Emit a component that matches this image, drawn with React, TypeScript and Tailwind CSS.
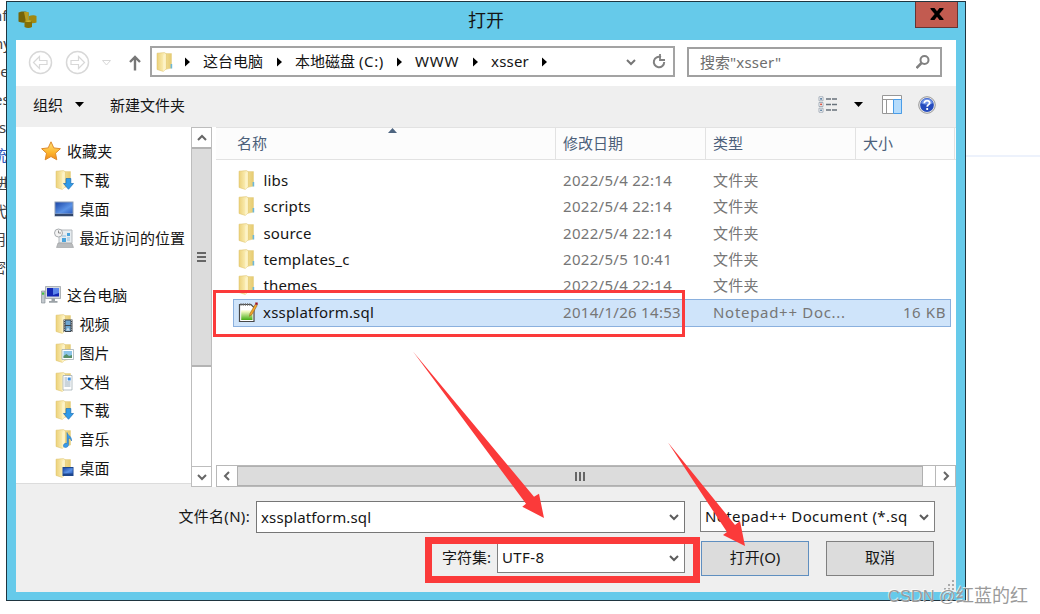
import type { ReactNode } from "react";

type IconName =
  | "star"
  | "download"
  | "desktop"
  | "recent"
  | "computer"
  | "video"
  | "picture"
  | "document"
  | "music"
  | "desktopFolder";

const sidebarItems: { label: string; icon: IconName; root?: boolean }[][] = [
  [
    { label: "收藏夹", icon: "star", root: true },
    { label: "下载", icon: "download" },
    { label: "桌面", icon: "desktop" },
    { label: "最近访问的位置", icon: "recent" },
  ],
  [
    { label: "这台电脑", icon: "computer", root: true },
    { label: "视频", icon: "video" },
    { label: "图片", icon: "picture" },
    { label: "文档", icon: "document" },
    { label: "下载", icon: "download" },
    { label: "音乐", icon: "music" },
    { label: "桌面", icon: "desktopFolder" },
  ],
];

const folders = [
  { name: "libs", date: "2022/5/4 22:14" },
  { name: "scripts", date: "2022/5/4 22:14" },
  { name: "source", date: "2022/5/4 22:14" },
  { name: "templates_c", date: "2022/5/5 10:41" },
  { name: "themes", date: "2022/5/4 22:14" },
];

// ends of the lines of the page behind the dialog
const pageLines = [
  { text: "nf", className: "-ml-[7px] text-[#444]" },
  { text: "ny", className: "-ml-[6px] text-[#444]" },
  { text: "pe", className: "-ml-[9px] text-[#444]" },
  { text: "es", className: "-ml-[6px] text-[#444]" },
  { text: "s", className: "-ml-[1px] text-[#444]" },
  { text: "统", className: "-ml-[8px] text-[#2e57bd]" },
  { text: "进", className: "-ml-[6px] text-[#444]" },
  { text: "代", className: "-ml-[8px] text-[#444]" },
  { text: "用", className: "-ml-[9px] text-[#444]" },
  { text: "密", className: "-ml-[9px] text-[#444]" },
];

const Gradients = () => (
  <svg className="absolute size-0">
    <defs>
      <linearGradient id="folder" x1="0" x2="1" y1="0" y2="0">
        <stop offset="0" stopColor="#cfae4c" />
        <stop offset="0.25" stopColor="#f0dc92" />
        <stop offset="1" stopColor="#e6cb70" />
      </linearGradient>
      <linearGradient id="folderFront" x1="0" x2="1" y1="0" y2="0">
        <stop offset="0" stopColor="#ecd17a" />
        <stop offset="0.6" stopColor="#f8e8a8" />
        <stop offset="1" stopColor="#fdf4cc" />
      </linearGradient>
      <linearGradient id="screen" x1="0" x2="1" y1="0" y2="1">
        <stop offset="0" stopColor="#1d47a8" />
        <stop offset="0.6" stopColor="#5b93e6" />
        <stop offset="1" stopColor="#2f5fc0" />
      </linearGradient>
      <linearGradient id="star" x1="0" x2="0" y1="0" y2="1">
        <stop offset="0" stopColor="#ffe27a" />
        <stop offset="0.6" stopColor="#fdb52c" />
        <stop offset="1" stopColor="#f08a1d" />
      </linearGradient>
      <linearGradient id="green" x1="0" x2="0" y1="0" y2="1">
        <stop offset="0.1" stopColor="#f2f8c0" />
        <stop offset="1" stopColor="#46ad14" />
      </linearGradient>
    </defs>
  </svg>
);

const FolderIcon = ({ children }: { children?: ReactNode }) => (
  <svg viewBox="0 0 20 20" className="size-5 shrink-0">
    <path d="M8 1.6h8.5V16L9 17.8z" fill="url(#folder)" stroke="#e3cc80" strokeWidth=".5" />
    <path d="M2 1.2 9.500.6l1.500 1V17l-2.800 2.4L2 17.500z" fill="url(#folderFront)" stroke="#dcc06a" strokeWidth=".5" />
    <path d="m8.200 3.500 2.600-1.700V17l-2.600 2.300z" fill="#fdf3c6" />
    {children ?? <path d="M15.600 12h1.600v4.500h-1.600z" fill="#6db8d8" />}
  </svg>
);

const ItemIcon = ({ name }: { name: IconName }) => {
  switch (name) {
    case "star":
      return (
        <svg viewBox="0 0 20 20" className="size-5 shrink-0">
          <path
            d="m10 .8 2.8 6.1 6.6.8-4.9 4.5 1.3 6.6L10 15.5l-5.8 3.3 1.3-6.600L.6 7.700l6.600-.8z"
            fill="url(#star)"
            stroke="#de8a2b"
            strokeWidth="1"
          />
        </svg>
      );
    case "download":
      return (
        <FolderIcon>
          <path d="M12 8.500h4.800v5h2.700l-5 5.800-5-5.800H12z" fill="#2f9be8" stroke="#1b6fb8" strokeWidth=".7" />
        </FolderIcon>
      );
    case "desktop":
      return (
        <svg viewBox="0 0 20 20" className="size-5 shrink-0">
          <path d="M.5 2.500h19v15H.5z" fill="#8d9db5" />
          <path d="M1.500 3.500h17v11h-17z" fill="url(#screen)" />
          <path d="M1 15h18v2H1z" fill="#33476b" />
        </svg>
      );
    case "recent":
      return (
        <svg viewBox="0 0 20 20" className="size-5 shrink-0">
          <path d="M5 2h13v13H5z" fill="#e6ecf0" stroke="#b4b9bd" />
          <path d="M8 10h4v4H8zM13 5h3v3h-3z" fill="#49a3dc" />
          <path d="M8 8h4M13 10h3M13 12h3" stroke="#8fbfe0" />
          <path d="m4 15 14 .5 1.500 4H2.500z" fill="#b9bbbd" stroke="#9a9da0" strokeWidth=".6" />
          <circle cx="4.500" cy="5" r="4" fill="#f3f3f3" stroke="#a8acaf" />
          <path d="M4.500 2.500V5H7" stroke="#777" fill="none" strokeWidth=".8" />
        </svg>
      );
    case "computer":
      return (
        <svg viewBox="0 0 20 20" className="size-5 shrink-0">
          <path d="M.5 6H4v12H.5z" fill="#c3c9ce" stroke="#7d868d" strokeWidth=".6" />
          <path d="M1 7.500h2.200v2.200H1z" fill="#44c043" />
          <path d="M4.500 1.500h15v12h-15z" fill="#d6dadd" stroke="#92999f" strokeWidth=".7" />
          <path d="M6 3h12v8.500H6z" fill="#1528b4" />
          <path d="M12 3h6v5l-6 2z" fill="#5c86ea" />
          <path d="M10.500 13.500H14V16h2.500v1.800H8V16h2.500z" fill="#9ba2a7" />
        </svg>
      );
    case "video":
      return (
        <FolderIcon>
          <path d="M9.500 5.500h9V18h-9z" fill="#3d444c" />
          <path d="M11.500 6.500h5V11h-5zM11.500 12h5v5h-5z" fill="#6ea6d0" />
          <path d="M10.500 6v12M17.600 6v12" stroke="#ddd" strokeWidth=".8" strokeDasharray="1 1.200" />
          <path d="m12 16.500 2-3 2 3z" fill="#c7dcea" />
        </FolderIcon>
      );
    case "picture":
      return (
        <FolderIcon>
          <path d="M8 6.500h11.500v10H8z" fill="#fff" stroke="#9aa6ae" strokeWidth=".7" />
          <path d="M9.500 8H18v7H9.500z" fill="#8cc4e8" />
          <path d="m9.500 13 3-2 2.500 2 3-1v3H9.500z" fill="#568f67" />
        </FolderIcon>
      );
    case "document":
      return (
        <FolderIcon>
          <path d="M9 3.500h9V18H9z" fill="#fff" stroke="#9aa6ae" strokeWidth=".7" />
          <path d="M10.500 6H13M10.500 8H13M10.500 10h6M10.500 12h6M10.500 14h6" stroke="#8aa0b0" strokeWidth=".9" />
          <path d="M13.700 5.500h3v3h-3z" fill="#3d8ee0" />
        </FolderIcon>
      );
    case "music":
      return (
        <FolderIcon>
          <path
            d="M13 3.500c.5 3 5 3.500 4.500 8.500-.5-2-1.800-2.600-3-3v6.500c0 2-1.500 3-3 3s-2.500-1-2-2.500 2-2 3.500-1.500z"
            fill="#3a9bea"
            stroke="#1b6cb5"
            strokeWidth=".5"
          />
        </FolderIcon>
      );
    default:
      return (
        <FolderIcon>
          <path d="M8.500 9h11v9h-11z" fill="#1e478c" />
          <path d="M9.300 10h9.400v5.500H9.300z" fill="url(#screen)" />
        </FolderIcon>
      );
  }
};

const SqlIcon = () => (
  <svg viewBox="0 0 20 20" className="size-5 shrink-0">
    <path d="M1.500 2.500H13l3 3v14H1.500z" fill="#fff" stroke="#484848" strokeWidth="1.200" />
    <path d="M3.200 8.500h11.300V18H3.200z" fill="url(#green)" />
    <path d="M3 1v3M5.200 1v3M7.400 1v3M9.600 1v3M11.800 1v3" stroke="#777" strokeWidth=".9" />
    <path d="m12 11.500 5.200-9.200 2 1.200-5.200 9-2.500 1.800z" fill="#f2a72d" stroke="#8b561c" strokeWidth=".5" />
    <path d="M17.200.500h2.500V3l-2.300-.4z" fill="#9c1020" />
  </svg>
);

const Chevron = ({ className = "", d = "m1 3 4 4 4-4" }: { className?: string; d?: string }) => (
  <svg viewBox="0 0 10 10" className={`size-2.5 shrink-0 ${className}`} fill="none" stroke="currentColor" strokeWidth="2">
    <path d={d} />
  </svg>
);

const Crumb = ({ children, className }: { children?: ReactNode; className: string }) => (
  <div className={`flex shrink-0 items-center whitespace-nowrap ${className}`}>
    <svg viewBox="0 0 5 10" className="mr-[13px] h-2.5 w-[5px] shrink-0">
      <path d="m0 .5 5 4.500-5 4.500z" />
    </svg>
    {children && <span className="-mt-0.5">{children}</span>}
  </div>
);

const TitleBar = () => (
  <div className="flex h-[38px] shrink-0 items-start">
    <svg viewBox="0 0 20 20" className="mt-2 ml-[11px] size-5">
      <path d="M.5 2.500c2-1.500 8-1.500 10 0v9c-2 1.500-8 1.500-10 0z" fill="#756408" />
      <path d="M6 2h4.500v9.500L8 12z" fill="#b89d20" />
      <path d="M11 6c2-1 6-1 7.500 0v6.500c-2 1-5.500 1-7.500 0z" fill="#a1880f" />
      <path d="M6.500 11c2-1 6-1 7.500 0v6c-2 1.300-5.500 1.300-7.500 0z" fill="#837007" />
      <path d="M6.500 11c2-1 6-1 7.500 0-2 1.300-5.500 1.300-7.500 0z" fill="#d1b92f" />
    </svg>
    <div className="mt-[5px] ml-[430px] text-[18px] leading-[26px]">打开</div>
    <button className="mr-[7px] ml-auto flex h-[26px] w-[43px] items-center justify-center border border-t-0 border-[#663434] bg-[#c25b50]">
      <svg viewBox="0 0 14 12" className="-mt-0.5 h-3 w-3.5">
        <path d="M.5 0h4L7 3.300 9.500 0h4v1L9.300 6l4.200 5v1h-4L7 8.700 4.500 12h-4v-1l4.200-5L.5 1z" />
      </svg>
    </button>
  </div>
);

const NavBar = () => (
  <div className="flex h-[46px] shrink-0 items-start pt-1.5">
    <svg viewBox="0 0 112 30" className="h-[30px] w-[112px] shrink-0" fill="none" stroke="#d8d8d8">
      <circle cx="24.500" cy="16.500" r="11" strokeWidth="1.500" />
      <path d="m17.500 16.500 6-6v4H31v4h-7.500v4z" strokeWidth="1.200" />
      <circle cx="61.500" cy="16.500" r="11" strokeWidth="1.500" />
      <path d="m68.500 16.500-6-6v4H55v4h7.500v4z" strokeWidth="1.200" />
      <path d="M86.500 14.500h8l-4 4.500z" />
    </svg>
    <svg
      viewBox="0 0 12 16"
      className="mt-[9px] mr-[9px] ml-px h-4 w-3 shrink-0"
      fill="none"
      stroke="#777"
      strokeWidth="2.400"
    >
      <path d="M6 15.500V2M1 7l5-5 5 5" />
    </svg>
    <div className="flex h-[31px] w-[525px] shrink-0 items-center border-2 border-[#a3a3a3] pl-[3px]">
      <FolderIcon />
      <Crumb className="ml-[10px] w-[92px]">这台电脑</Crumb>
      <Crumb className="w-[120px]">
        本地磁盘<span className="ml-1 tracking-[0.6px]">(C:)</span>
      </Crumb>
      <Crumb className="w-[76px] tracking-[0.8px]">WWW</Crumb>
      <Crumb className="w-[69px] tracking-[0.2px]">xsser</Crumb>
      <Crumb className="w-[84px]" />
      <Chevron className="text-[#767676]" />
      <svg viewBox="0 0 14 15" className="ml-4 h-[15px] w-3.5 shrink-0" fill="none" stroke="#808080" strokeWidth="2">
        <path d="M9 3.200A5.200 5.200 0 1 0 12.200 8" />
        <path d="M8 0v6h5" strokeWidth="1.800" />
      </svg>
    </div>
    <div className="mt-px ml-3 flex h-[30px] w-[255px] shrink-0 items-center border-2 border-[#a0a0a0] pl-[11px] text-[#6e6e6e]">
      搜索<span className="tracking-[0.2px]">"xsser"</span>
      <svg viewBox="0 0 14 14" className="mr-[10px] ml-auto size-3.5" fill="none" stroke="#808080" strokeWidth="2">
        <circle cx="8.500" cy="5" r="4" />
        <path d="m5.500 8-5 5" strokeWidth="2.500" />
      </svg>
    </div>
  </div>
);

const Toolbar = () => (
  <div className="flex h-[41px] shrink-0 items-center bg-[#efefef] pb-1 pl-[17px]">
    <span>组织</span>
    <svg viewBox="0 0 9 5" className="ml-3 h-[5px] w-[9px]">
      <path d="M0 0h9L4.500 5z" />
    </svg>
    <span className="ml-[26px]">新建文件夹</span>
    <svg viewBox="0 0 20 18" className="ml-auto h-[18px] w-5" fill="none">
      <path d="M1 .800h4v4H1zM1 6.500h4v4H1zM1 12.200h4v4H1z" fill="#fff" stroke="#a5aeb9" />
      <path d="M2.200 2h1.700v1.700H2.200zM2.200 13.400h1.700v1.700H2.200z" fill="#54799c" />
      <path d="M2.200 7.600h1.700v1.700H2.200z" fill="#d3432f" />
      <path d="M8 3h5M14 3h5M8 8.500h5M14 8.500h5M8 14h5M14 14h5" stroke="#69737c" strokeWidth="1.300" />
    </svg>
    <svg viewBox="0 0 9 5" className="ml-4 h-[5px] w-[9px]">
      <path d="M0 0h9L4.500 5z" />
    </svg>
    <svg viewBox="0 0 20 19" className="ml-[19px] h-[19px] w-5" fill="#fff" stroke="#979797">
      <path d="M.5.500h19v18H.5z" />
      <path d="M.5 4.500h19M4.500 4.500v14" fill="none" />
      <path d="M11.500 4.500h8v14h-8z" fill="#b5dcfc" stroke="#4a9de8" />
    </svg>
    <svg viewBox="0 0 18 18" className="mr-[20px] ml-4 size-[18px]">
      <circle cx="9" cy="9" r="8.300" fill="#ececec" stroke="#999" />
      <circle cx="9" cy="9" r="6.900" fill="#254bbd" />
      <path d="M3 7a6.300 6.300 0 0 1 12 0C12 9 6 9 3 7z" fill="#6d90e5" />
      <path
        d="M6.300 7.200c0-3.600 5.600-3.300 5.400-.2-.1 1.600-2.500 1.800-2.500 3.700M9.200 12v2"
        fill="none"
        stroke="#fff"
        strokeWidth="1.800"
      />
    </svg>
  </div>
);

const Sidebar = () => (
  <div className="flex w-[175px] shrink-0 flex-col gap-[28.7px] overflow-hidden border-b border-[#dcdcdc] pt-[10px]">
    {sidebarItems.map((group, index) => (
      <div key={index} className="flex flex-col">
        {group.map((item) => (
          <div
            key={item.icon}
            className={`flex h-[28.8px] shrink-0 items-center whitespace-nowrap ${item.root ? "gap-1.5 pl-[25px]" : "gap-[6px] pl-[37.5px]"}`}
          >
            <ItemIcon name={item.icon} />
            <span className="tracking-[0.1px]">{item.label}</span>
          </div>
        ))}
      </div>
    ))}
  </div>
);

const VerticalScrollbar = () => (
  <div className="flex w-[21px] shrink-0 flex-col border border-[#bdbdbd] bg-white text-[#666]">
    <div className="flex h-[19px] items-center justify-center">
      <Chevron d="m1 7 4-4 4 4" />
    </div>
    <div className="flex h-[220px] flex-col items-center justify-center gap-0.5 border-y-2 border-[#b3b3b3] bg-[#dcdcdc]">
      <div className="h-0.5 w-[9px] bg-[#666]" />
      <div className="h-0.5 w-[9px] bg-[#666]" />
      <div className="h-0.5 w-[9px] bg-[#666]" />
    </div>
    <div className="mt-auto flex h-5 items-center justify-center border-t border-[#bdbdbd]">
      <Chevron />
    </div>
  </div>
);

const HorizontalScrollbar = () => (
  <div className="mt-auto flex h-[22px] border border-[#b8b8b8] bg-white text-[#666]">
    <div className="flex w-5 items-center justify-center">
      <Chevron d="M7 1 3 5l4 4" />
    </div>
    <div className="flex w-[686px] items-center justify-center gap-0.5 border border-[#b0b0b0] bg-[#dcdcdc]">
      <div className="h-[9px] w-0.5 bg-[#666]" />
      <div className="h-[9px] w-0.5 bg-[#666]" />
      <div className="h-[9px] w-0.5 bg-[#666]" />
    </div>
    <div className="ml-auto flex w-5 items-center justify-center border-l border-[#b8b8b8]">
      <Chevron d="m3 1 4 4-4 4" />
    </div>
  </div>
);

const FileList = () => (
  <div className="ml-1 flex min-w-0 flex-1 flex-col">
    <div className="relative flex h-[33px] shrink-0 items-center border-y border-[#e2e2e2] bg-[#fcfcfc] text-[#4c607a]">
      <div className="flex h-full w-[340px] items-center border-r border-[#e2e2e2] pb-0.5 pl-[21px]">名称</div>
      <div className="flex h-full w-[150px] items-center border-r border-[#e2e2e2] pb-0.5 pl-[7px]">修改日期</div>
      <div className="flex h-full w-[150px] items-center border-r border-[#e2e2e2] pb-0.5 pl-[7px]">类型</div>
      <div className="flex h-full w-[99px] items-center border-r border-[#e2e2e2] pb-0.5 pl-[7px]">大小</div>
      <svg viewBox="0 0 9 5" className="absolute top-0 left-[172px] h-[5px] w-[9px]">
        <path d="M4.500 0 9 5H0z" fill="#4e6580" />
      </svg>
    </div>
    <div className="mt-[7px] pl-[21px]">
      {folders.map((folder) => (
        <div key={folder.name} className="flex h-[26.3px] items-center">
          <FolderIcon />
          <div className="ml-[6.5px] w-[299.5px] tracking-[0.15px]">{folder.name}</div>
          <div className="w-[150px] tracking-[0.3px] text-[#767676]">{folder.date}</div>
          <div className="tracking-[0.2px] text-[#767676]">文件夹</div>
        </div>
      ))}
      <div className="-ml-[4px] mt-[0.5px] flex h-7 w-[718px] items-center border border-[#8ab0de] bg-[#cfe4fa] pb-px pl-[4px]">
        <SqlIcon />
        <div className="ml-[5px] w-[300px] tracking-[0.2px]">xssplatform.sql</div>
        <div className="w-[150px] tracking-[0.3px] text-[#767676]">2014/1/26 14:53</div>
        <div className="tracking-[0.7px] text-[#767676]">Notepad++ Doc...</div>
        <div className="mr-1 ml-auto tracking-[0.6px] text-[#767676]">16 KB</div>
      </div>
    </div>
    <HorizontalScrollbar />
  </div>
);

const Footer = () => (
  <div className="flex flex-1 gap-[15px] bg-[#efefef] pt-[14px]">
    <div className="flex w-[669px] flex-col items-end">
      <div className="flex items-center">
        <label className="mr-1.5 -mt-0.5 tracking-[0.3px]">文件名(N):</label>
        <div className="flex h-8 w-[429px] items-center border border-[#767676] bg-white pr-[5px] pl-[4px]">
          <span className="tracking-[0.15px]">xssplatform.sql</span>
          <Chevron className="ml-auto text-[#5c5c5c]" />
        </div>
      </div>
      <div className="mt-[9px] flex items-center">
        <label className="mr-1.5 -mt-0.5">字符集:</label>
        <div className="flex h-[31px] w-[188px] items-center border border-[#808080] bg-white pr-[5px] pl-[4px]">
          <span className="-mt-0.5 tracking-[0.4px]">UTF-8</span>
          <Chevron className="ml-auto text-[#5c5c5c]" />
        </div>
      </div>
    </div>
    <div className="flex w-[235px] flex-col">
      <div className="flex h-[31px] items-center border border-[#808080] bg-white pr-[5px] pl-[4px] whitespace-nowrap">
        <span className="-mt-px tracking-[0.4px]">Notepad++ Document (*.sq</span>
        <Chevron className="ml-auto text-[#5c5c5c]" />
      </div>
      <div className="mt-[9px] ml-px flex gap-[17px]">
        <button className="h-[35px] w-[108px] border border-[#5f8fc0] bg-[#dcdcdc] pb-[3px]">打开(O)</button>
        <button className="h-[35px] w-[108px] border border-[#808080] bg-[#dcdcdc] pb-[3px]">取消</button>
      </div>
    </div>
  </div>
);

const Annotations = () => (
  <svg viewBox="0 0 1040 614" className="pointer-events-none absolute inset-0 h-[614px] w-[1040px]">
    <g fill="none" stroke="#fb3a3a">
      <path d="M214.500 291.500h469v44h-469z" strokeWidth="3" />
      <path d="M428.500 540.500h268v39h-268z" strokeWidth="7" />
    </g>
    <g fill="#fb3a3a">
      <path d="m413 351.500 121 145.200 5-3 5 24.300-21.700-11.300 3.700-3z" />
      <path d="m668 442.500 67 82.500 5-4 5 25-22-11 4-3z" />
    </g>
    <path d="M953 580v10M949 584v6M945 588v2" stroke="#aaa" strokeWidth="2" strokeDasharray="2 2" />
  </svg>
);

const App = () => {
  return (
    <main className="relative flex h-[614px] w-[1040px] overflow-hidden bg-white pt-px font-['Noto_Sans','Noto_Sans_CJK_SC',sans-serif] text-[15px] leading-5 text-[#151515]">
      <Gradients />
      <div className="flex h-[290px] w-1.5 shrink-0 flex-col overflow-hidden whitespace-nowrap">
        {pageLines.map((line) => (
          <span key={line.text} className={`h-7 shrink-0 pt-1 ${line.className}`}>
            {line.text}
          </span>
        ))}
      </div>
      <section className="flex h-[600px] w-[960px] shrink-0 flex-col border border-[#1f3540] bg-[#66caea]">
        <TitleBar />
        <div className="mx-[9px] mb-2 flex min-h-0 flex-1 flex-col bg-white">
          <NavBar />
          <Toolbar />
          <div className="flex h-[360px] shrink-0 bg-[#efefef]">
            <div className="flex h-[357px] bg-white">
              <Sidebar />
            </div>
            <VerticalScrollbar />
            <div className="flex min-w-0 flex-1 bg-white">
              <FileList />
            </div>
          </div>
          <Footer />
        </div>
      </section>
      <div className="mt-[154px] h-0.5 flex-1 bg-[#edf2fc]" />
      <Annotations />
      <div className="absolute top-[584px] left-[888px] flex items-center font-['Liberation_Sans','Noto_Sans_CJK_SC',sans-serif] text-[16.5px] leading-6 whitespace-nowrap text-[#9a9a9a] [text-shadow:-1px_-1px_0_#ffffffaa]">
        CSDN @<span className="text-[18px]">红蓝的红</span>
      </div>
    </main>
  );
};

export default App;
